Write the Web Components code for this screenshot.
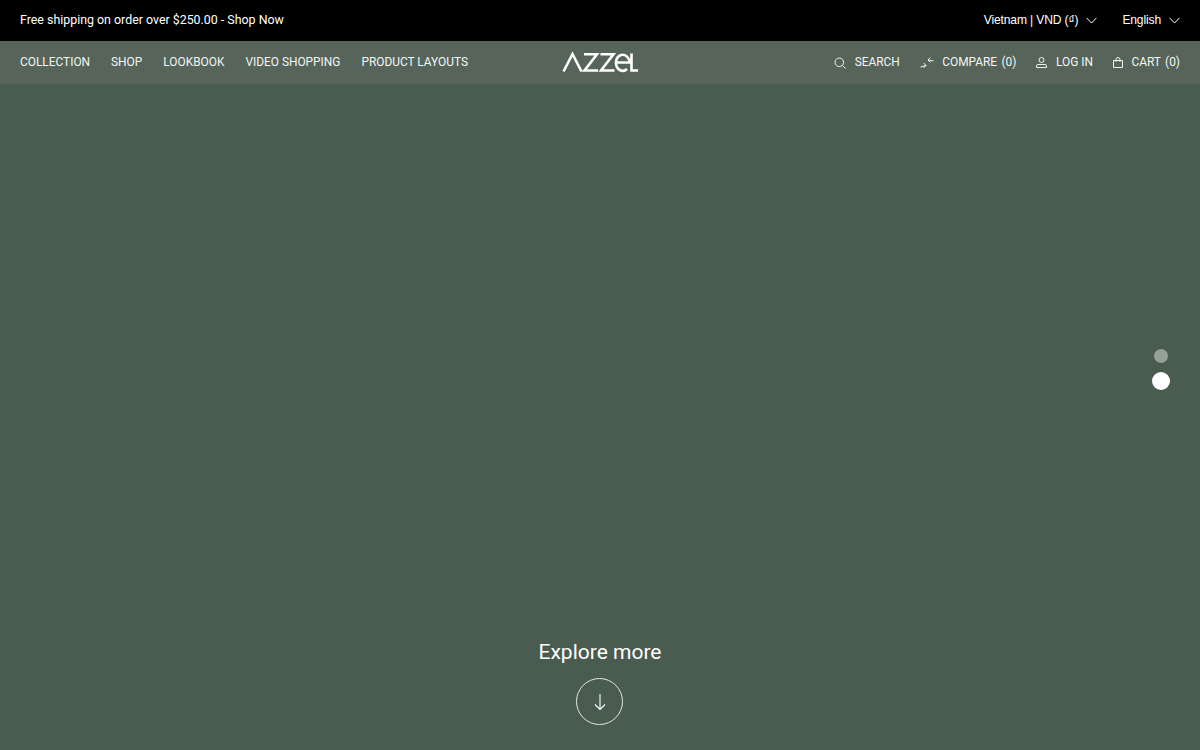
<!DOCTYPE html>
<html lang="en"><head><meta charset="utf-8"><title>Azzel</title>
<style>
html,body{margin:0;height:100%;background:#4a5b4f}
body{font-family:"Roboto","Liberation Sans",sans-serif;color:#fff;overflow:hidden}
</style></head><body>
<azzel-page></azzel-page>
<template id="t-page"><style>
:host{display:flex;flex-direction:column;height:750px;position:relative}
main{flex:1;display:flex;flex-direction:column;align-items:center;justify-content:flex-end;padding-bottom:25px}
</style>
<top-bar></top-bar><main-nav></main-nav>
<main><explore-more></explore-more></main>
<slide-dots></slide-dots></template>

<template id="t-top"><style>
:host{display:flex;box-sizing:border-box;height:41px;padding:0 20px 1px;background:#000;align-items:center;justify-content:space-between;font:400 12.400px/1 "Roboto",sans-serif;color:#fff}
.r{display:flex;align-items:center;font:400 12.100px/1 "Liberation Sans",sans-serif;letter-spacing:-.15px}
.r span{display:flex;align-items:center;gap:8px}
.r span+span{margin-left:25px}
svg{width:11px;height:7px;fill:none;stroke:#fff;stroke-width:1}
</style>
<span class="promo">Free shipping on order over $250.00 - Shop Now</span>
<div class="r"><span>Vietnam | VND (₫)<svg viewBox="0 0 11 7"><path d="M.5.8 5.500 6l5-5.200"/></svg></span><span>English<svg viewBox="0 0 11 7"><path d="M.5.8 5.500 6l5-5.200"/></svg></span></div></template>

<template id="t-nav"><style>
:host{display:grid;grid-template-columns:1fr auto 1fr;align-items:center;height:43px;padding:0 20px;background:#56645a;font:400 11.900px/1 "Roboto",sans-serif;color:#f4f6f4}
nav{display:flex;gap:21px}
.r{display:flex;justify-content:flex-end;gap:20px;align-items:center}
.i{display:flex;align-items:center;gap:8.500px}
svg.ic{fill:none;stroke:#f0f2f0;stroke-width:1}
.logo{display:block;width:78px;height:22px;fill:none;stroke:#fff;stroke-width:2.600;margin:-1px 0 0 1px}
.z{word-spacing:1.500px}
</style>
<nav><span>COLLECTION</span><span>SHOP</span><span>LOOKBOOK</span><span>VIDEO SHOPPING</span><span>PRODUCT LAYOUTS</span></nav>
<svg class="logo" viewBox="0 0 78 22" role="img" aria-label="Azzel"><path d="M1.500 20.500 10.500 3 19.500 20.500M22 3.200h13L22.500 19.500H36M38.500 3.200h13L39 19.500h13.500M54 11.500h13.500a6.800 8 0 1 0-2.500 6.500M69.500 2.500v17H76"/></svg>
<div class="r">
<span class="i"><svg class="ic" width="12" height="12" viewBox="0 0 12 12"><circle cx="5.300" cy="5.300" r="4.300"/><path d="m8.500 8.500 3 3"/></svg>SEARCH</span>
<span class="i"><svg class="ic" width="14" height="12" viewBox="0 0 14 12"><path d="M.5 10 6 8.500M3.800 6 6 8.500 3.500 11M13.500 4 8 3M10.200 .5 8 3l2.500 2.500"/></svg><span class="z">COMPARE (0)</span></span>
<span class="i"><svg class="ic" width="11" height="11" viewBox="0 0 11 11"><circle cx="5.500" cy="3" r="2.500"/><path d="M.5 10.500V9A1.500 1.500 0 0 1 2 7.500h7A1.500 1.500 0 0 1 10.500 9v1.500z"/></svg>LOG IN</span>
<span class="i"><svg class="ic" width="10" height="11" viewBox="0 0 10 11"><path d="M.5 3.500h9v7h-9zM3 5V2.500a2 2 0 0 1 4 0V5"/></svg><span class="z">CART (0)</span></span>
</div></template>

<template id="t-exp"><style>
:host{display:flex;flex-direction:column;align-items:center;gap:14px;font:400 21px/1.100 "Roboto",sans-serif;color:#fff}
.c{box-sizing:border-box;width:47px;height:47px;border:1px solid #e3e8e4;border-radius:50%;display:flex;align-items:center;justify-content:center}
svg{width:12px;height:18px;fill:none;stroke:#fff;stroke-width:1.100}
</style><span>Explore more</span>
<div class="c"><svg viewBox="0 0 12 18"><path d="M6 1v15.500M1 11.500l5 5 5-5"/></svg></div></template>

<template id="t-dots"><style>
:host{position:absolute;right:30px;top:349px;display:flex;flex-direction:column;align-items:center;gap:9px}
i{display:block;border-radius:50%;width:14px;height:14px;background:#95a097}
i+i{width:18px;height:18px;background:#fff}
</style><i></i><i></i></template>
<script>
const def=(n,t)=>customElements.define(n,class extends HTMLElement{constructor(){super();this.attachShadow({mode:"open"}).append(document.getElementById(t).content.cloneNode(true))}});
def("top-bar","t-top");def("main-nav","t-nav");def("explore-more","t-exp");def("slide-dots","t-dots");def("azzel-page","t-page");
</script></body></html>
